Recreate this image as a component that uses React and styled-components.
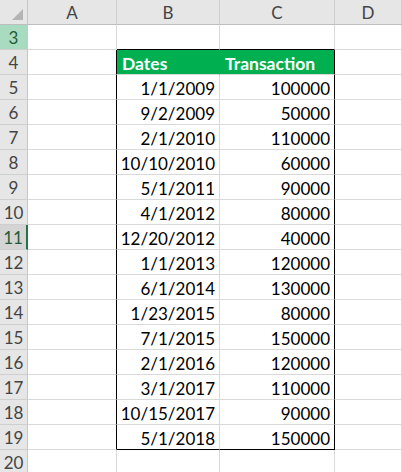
import React from 'react';
import styled, { createGlobalStyle } from 'styled-components';

const GlobalStyle = createGlobalStyle`
  html, body {
    margin: 0;
    padding: 0;
    background: #ffffff;
    overflow: hidden;
  }
  body {
    font-family: Lato, "Liberation Sans", sans-serif;
  }
`;

const Sheet = styled.div`
  display: grid;
  grid-template-columns: 28px 89px 103px 115px 1fr;
  grid-auto-rows: 25px;
  width: 402px;
  height: 472px;
  overflow: hidden;
`;

const Corner = styled.div`
  background: #e6e6e6;
  border-right: 1px solid #c6c6c6;
  border-bottom: 1px solid #bdbdbd;
  display: flex;
  align-items: flex-end;
  justify-content: flex-end;
  padding: 0 4px 4px 0;
`;

const ColHead = styled.div`
  background: #e6e6e6;
  border-right: 1px solid #cfcfcf;
  border-bottom: 1px solid #bdbdbd;
  color: #444444;
  font-size: 17px;
  display: flex;
  align-items: center;
  justify-content: center;
`;

const RowHead = styled.div`
  background: ${(p) => (p.$active ? '#a9dbc0' : p.$current ? '#d4d4d4' : '#e6e6e6')};
  border-right: ${(p) => (p.$current ? '2px solid #217346' : '1px solid #c6c6c6')};
  border-bottom: 1px solid #cfcfcf;
  color: ${(p) => (p.$active || p.$current ? '#1f5c3a' : '#444444')};
  font-size: 17px;
  display: flex;
  align-items: center;
  justify-content: center;
`;

const Cell = styled.div`
  border-right: 1px solid ${(p) => p.$right || '#d9d9d9'};
  border-bottom: 1px solid ${(p) => p.$bottom || '#d9d9d9'};
  background: ${(p) => (p.$head ? '#00b050' : '#ffffff')};
  color: ${(p) => (p.$head ? '#ffffff' : '#000000')};
  font-weight: ${(p) => (p.$head ? 700 : 400)};
  font-size: ${(p) => (p.$head ? '17.5px' : '17px')};
  display: flex;
  align-items: center;
  justify-content: ${(p) => (p.$head ? 'flex-start' : 'flex-end')};
  padding: 2px 4px 0 5px;
  white-space: nowrap;
`;

const rows = [
  ['1/1/2009', '100000'],
  ['9/2/2009', '50000'],
  ['2/1/2010', '110000'],
  ['10/10/2010', '60000'],
  ['5/1/2011', '90000'],
  ['4/1/2012', '80000'],
  ['12/20/2012', '40000'],
  ['1/1/2013', '120000'],
  ['6/1/2014', '130000'],
  ['1/23/2015', '80000'],
  ['7/1/2015', '150000'],
  ['2/1/2016', '120000'],
  ['3/1/2017', '110000'],
  ['10/15/2017', '90000'],
  ['5/1/2018', '150000'],
];

const Triangle = () => (
  <svg width="11" height="11" viewBox="0 0 11 11">
    <polygon points="11,0 11,11 0,11" fill="#b4b4b4" />
  </svg>
);

export default function App() {
  const lines = [];
  // row 3: empty, bottom edge of B/C is the table's top border
  lines.push(
    <React.Fragment key="r3">
      <RowHead $active>3</RowHead>
      <Cell />
      <Cell $bottom="#000" />
      <Cell $bottom="#000" />
      <Cell />
    </React.Fragment>
  );
  lines.push(
    <React.Fragment key="r4">
      <RowHead>4</RowHead>
      <Cell $right="#000" />
      <Cell $head $right="#00b050">Dates</Cell>
      <Cell $head $right="#000">Transaction</Cell>
      <Cell />
    </React.Fragment>
  );
  rows.forEach(([date, amount], i) => {
    const n = i + 5;
    const last = i === rows.length - 1;
    lines.push(
      <React.Fragment key={n}>
        <RowHead $current={n === 11}>{n}</RowHead>
        <Cell $right="#000" />
        <Cell $bottom={last ? '#000' : undefined}>{date}</Cell>
        <Cell $right="#000" $bottom={last ? '#000' : undefined}>{amount}</Cell>
        <Cell />
      </React.Fragment>
    );
  });
  lines.push(
    <React.Fragment key="r20">
      <RowHead>20</RowHead>
      <Cell />
      <Cell />
      <Cell />
      <Cell />
    </React.Fragment>
  );

  return (
    <>
      <GlobalStyle />
      <Sheet>
        <Corner>
          <Triangle />
        </Corner>
        <ColHead>A</ColHead>
        <ColHead>B</ColHead>
        <ColHead>C</ColHead>
        <ColHead>D</ColHead>
        {lines}
      </Sheet>
    </>
  );
}
